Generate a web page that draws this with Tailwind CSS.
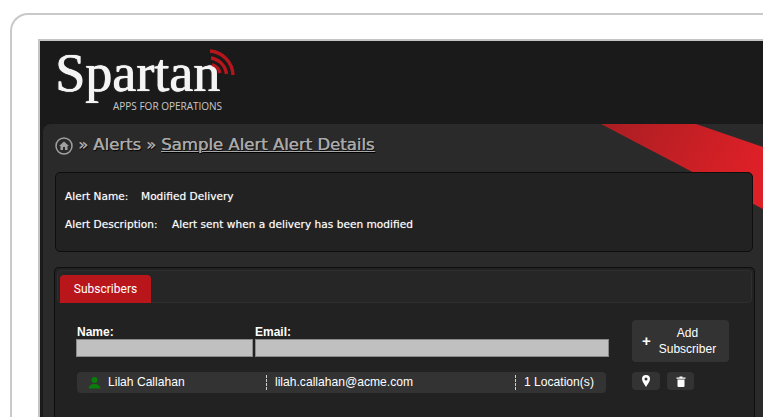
<!DOCTYPE html>
<html lang="en">
<head>
  <meta charset="UTF-8">
  <script src="https://cdn.jsdelivr.net/npm/@tailwindcss/browser@4"></script>
  <title>Alert Details</title>
</head>
<body class="h-[417px] overflow-hidden bg-white pl-[10px] pt-[13px]">
  <div class="h-[404px] rounded-tl-[18px] border-l-2 border-t-2 border-[#c9c9c9] pl-[26px] pt-[24px]">
    <div class="h-[378px] border-l-2 border-t-2 border-[#c4c4c4] bg-[#1a1a1a]">
      <!-- header -->
      <div class="relative h-[83px] w-full">
        <div class="absolute left-[15px] top-[10px] font-['Liberation_Serif',serif] text-[54px] leading-[44px] text-[#f4f4f4] [text-shadow:0.8px_0_0_#f4f4f4,0_0_1px_#f4f4f4]">Spartan</div>
        <svg class="absolute left-[165px] top-[7px]" width="33" height="30" viewBox="0 0 33 30" fill="none" stroke="#b5161c" stroke-width="3.400">
          <path d="M5 3A25 25 0 0 1 28 27"/>
          <path d="M6 10A18.500 18.500 0 0 1 21.500 26"/>
          <path d="M7 16.500A12 12 0 0 1 15 25"/>
        </svg>
        <div class="absolute left-[73px] top-[58px] font-['Open_Sans',sans-serif] text-[10px] leading-[14px] text-[#c8c8c8]">APPS FOR OPERATIONS</div>
      </div>

      <!-- content panel -->
      <div class="relative ml-[3px] h-[293px] rounded-tl-[8px] bg-[#2a2a2a] pl-[12px] pt-[11px]">
        <svg class="absolute left-[558px] top-0" width="162" height="86" viewBox="0 0 162 86">
          <defs>
            <linearGradient id="ribbon" x1="0" y1="0" x2="1" y2="0.3">
              <stop offset="0" stop-color="#a81e22"/>
              <stop offset="1" stop-color="#dd2027"/>
            </linearGradient>
          </defs>
          <polygon points="0,0 95,0 162,23 162,85" fill="url(#ribbon)"/>
        </svg>

        <div class="relative flex h-[21px] items-center gap-[5px] font-['DejaVu_Sans',sans-serif] text-[16.500px] text-[#a9a9a9] [text-shadow:0.4px_0_0_#a9a9a9,1px_1px_1px_#000000]">
          <svg width="18" height="18" viewBox="0 0 18 18">
            <circle cx="9" cy="9" r="8" fill="none" stroke="#a0a0a0" stroke-width="1.500"/>
            <path d="M9 4.500 14 9h-1.500v4H10v-3H8v3H5.500V9H4z" fill="#a0a0a0"/>
          </svg>
          <span>»</span><span>Alerts</span><span>»</span><span class="underline">Sample Alert Alert Details</span>
        </div>

        <div class="relative mt-[16px] h-[80px] w-[698px] rounded-[5px] border border-[#0e0e0e] bg-[#222222] pl-[9px] pt-[15px] font-['DejaVu_Sans',sans-serif] text-[10.600px] leading-[16px] text-white [text-shadow:0_0_1px_#ffffff80]">
          <div class="flex"><span class="w-[76px]">Alert Name:</span><span>Modified Delivery</span></div>
          <div class="mt-[12px] flex"><span class="w-[107px]">Alert Description:</span><span>Alert sent when a delivery has been modified</span></div>
        </div>

        <!-- tabs -->
        <div class="relative ml-[-1px] mt-[15px] h-[150px] w-[701px] rounded-t-[5px] border border-b-0 border-[#0e0e0e] bg-[#222222] p-[2px]">
          <div class="flex h-[33px] items-end rounded-[4px] border border-[#2e2e2e] bg-[#262626] pl-[2px]">
            <div class="mb-[-1px] flex h-[28px] w-[91px] items-center justify-center rounded-t-[4px] bg-[#b9161c] font-['Roboto',sans-serif] text-[12px] text-white">Subscribers</div>
          </div>

          <div class="flex pl-[19px] pt-[22px]">
            <div class="w-[556px]">
              <div class="flex gap-[2px] font-['Liberation_Sans',sans-serif] text-[12px] font-bold leading-[14px] text-white">
                <div class="w-[177px]"><span class="pl-[1px]">Name:</span><div class="h-[18px] border border-[#8a8a8a] bg-[#c0c0c0]"></div></div>
                <div class="w-[354px]"><span>Email:</span><div class="h-[18px] border border-[#8a8a8a] bg-[#c0c0c0]"></div></div>
              </div>
              <div class="ml-[1px] mt-[15px] flex h-[21px] w-[529px] items-center rounded-[4px] bg-[#333333] font-['Liberation_Sans',sans-serif] text-[12.100px] text-white">
                <div class="flex w-[189px] items-center gap-[7px] pl-[11px]">
                  <svg width="13" height="13" viewBox="0 0 13 13" fill="#0a7d0a"><circle cx="6.500" cy="4" r="3"/><path d="M0.500 12.500c1-3.500 3-4.500 6-4.500s5 1 6 4.500z"/></svg>
                  <span>Lilah Callahan</span>
                </div>
                <div class="h-[15px] w-[249px] border-l border-dashed border-[#cfcfcf] pl-[8px] leading-[15px]">lilah.callahan@acme.com</div>
                <div class="h-[15px] border-l border-dashed border-[#cfcfcf] pl-[8px] leading-[15px]">1 Location(s)</div>
              </div>
            </div>
            <div class="mt-[-5px]">
              <div class="flex h-[42px] w-[97px] items-center rounded-[4px] bg-[#333333] pl-[10px] font-['Liberation_Sans',sans-serif] text-[12px] leading-[16px] text-white">
                <span class="text-[15px] font-bold">+</span>
                <span class="ml-[8px] text-center">Add<br>Subscriber</span>
              </div>
              <div class="mt-[10px] flex gap-[7px]">
                <div class="flex h-[18px] w-[28px] items-center justify-center rounded-[4px] bg-[#333333]">
                  <svg width="8" height="12" viewBox="0 0 8 12"><path fill-rule="evenodd" fill="#ffffff" d="M4 0a4 4 0 0 1 4 4c0 2.500-2.500 5.500-4 8C2.500 9.500 0 6.500 0 4a4 4 0 0 1 4-4zm0 2.500a1.500 1.500 0 1 0 0 3 1.500 1.500 0 0 0 0-3z"/></svg>
                </div>
                <div class="flex h-[18px] w-[27px] items-center justify-center rounded-[4px] bg-[#333333]">
                  <svg width="10" height="11" viewBox="0 0 10 11" fill="#ffffff"><path d="M0.500 1.500h3V.5h3v1h3v1.200h-9z"/><path d="M1.500 3.500h7V10a1 1 0 0 1-1 1h-5a1 1 0 0 1-1-1z"/></svg>
                </div>
              </div>
            </div>
          </div>
        </div>
      </div>
    </div>
  </div>
</body>
</html>
